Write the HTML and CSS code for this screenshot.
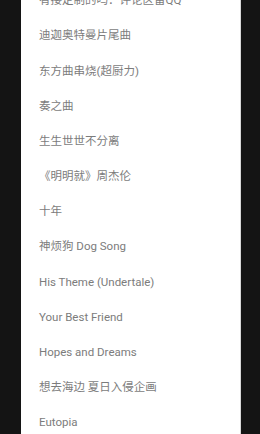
FILE: index.html
```html
<!DOCTYPE html>
<html lang="zh-CN">
<head>
<meta charset="UTF-8">
<meta name="viewport" content="width=device-width, initial-scale=1.0">
<title>歌单</title>
<link rel="stylesheet" href="styles.css">
</head>
<body>

<div class="screen">
    <!-- song list, scrolled a little so the first row is cut off -->
    <ul class="song-list">
        <li>有接定制的吗：评论区留QQ</li>
        <li>迪迦奥特曼片尾曲</li>
        <li>东方曲串烧(超厨力)</li>
        <li>奏之曲</li>
        <li>生生世世不分离</li>
        <li>《明明就》周杰伦</li>
        <li>十年</li>
        <li>神烦狗 Dog Song</li>
        <li>His Theme (Undertale)</li>
        <li>Your Best Friend</li>
        <li>Hopes and Dreams</li>
        <li>想去海边 夏日入侵企画</li>
        <li>Eutopia</li>
    </ul>
</div>

</body>
</html>
```

FILE: styles.css
```css
body {
    margin: 0;
    height: 434px;
    overflow: hidden;
    background-color: #141414;
    display: flex;
    justify-content: flex-start;
}

/* white phone screen between the black bars */
.screen {
    margin-left: 21px;
    width: 219px;
    height: 434px;
    overflow: hidden;
    background-color: #ffffff;
    border-right: 1px solid #d8d8d8;
}

.song-list {
    list-style: none;
    margin: -16.8px 0 0 0; /* scroll offset */
    padding: 0;
}

.song-list li {
    height: 35.18px;
    line-height: 35.18px;
    padding-left: 18px;
    font-family: Roboto, "Noto Sans CJK SC", sans-serif;
    font-size: 11.5px;
    color: #7c7c7c;
    white-space: nowrap;
}
```
